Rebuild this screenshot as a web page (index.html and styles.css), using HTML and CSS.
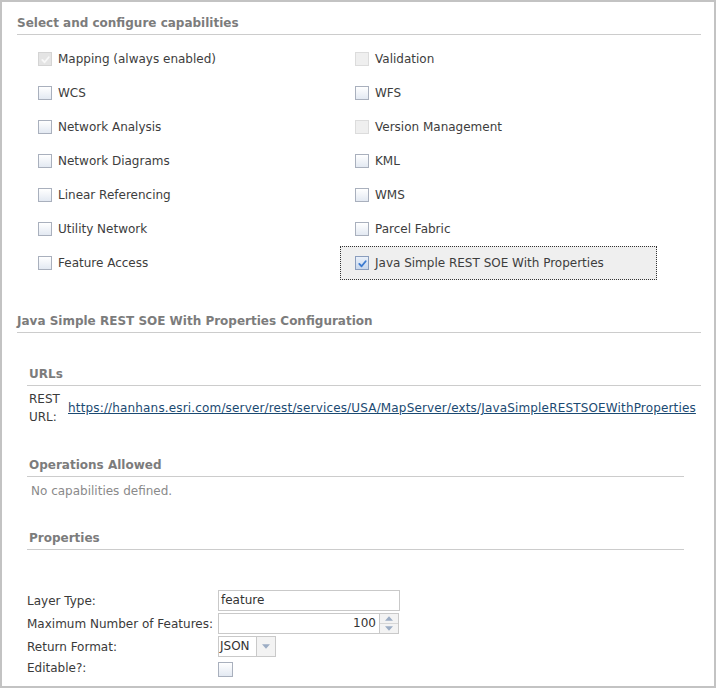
FILE: index.html
```html
<!DOCTYPE html>
<html>
<head>
<meta charset="utf-8">
<link rel="stylesheet" href="styles.css">
</head>
<body>
<div class="frame">
  <h2 class="sec-title">Select and configure capabilities</h2>
  <div class="cap-grid">
    <div class="cap"><span class="cb cb-disabled-checked"><svg viewBox="0 0 12 12"><path d="M2.5 6.5 L5 9 L9.5 3.5"/></svg></span><span>Mapping (always enabled)</span></div>
    <div class="cap"><span class="cb cb-disabled"></span><span>Validation</span></div>
    <div class="cap"><span class="cb"></span><span>WCS</span></div>
    <div class="cap"><span class="cb"></span><span>WFS</span></div>
    <div class="cap"><span class="cb"></span><span>Network Analysis</span></div>
    <div class="cap"><span class="cb cb-disabled"></span><span>Version Management</span></div>
    <div class="cap"><span class="cb"></span><span>Network Diagrams</span></div>
    <div class="cap"><span class="cb"></span><span>KML</span></div>
    <div class="cap"><span class="cb"></span><span>Linear Referencing</span></div>
    <div class="cap"><span class="cb"></span><span>WMS</span></div>
    <div class="cap"><span class="cb"></span><span>Utility Network</span></div>
    <div class="cap"><span class="cb"></span><span>Parcel Fabric</span></div>
    <div class="cap"><span class="cb"></span><span>Feature Access</span></div>
    <div class="cap cap-active"><span class="cb cb-checked"><svg viewBox="0 0 12 12"><path d="M2.5 6.5 L5 9 L9.5 3.5"/></svg></span><span>Java Simple REST SOE With Properties</span></div>
  </div>

  <h2 class="sec-title sec-config">Java Simple REST SOE With Properties Configuration</h2>

  <h3 class="sub-title sub-wide">URLs</h3>
  <table class="url-table">
    <tr>
      <td class="url-label">REST<br>URL:</td>
      <td class="url-link"><a href="#">https://hanhans.esri.com/server/rest/services/USA/MapServer/exts/JavaSimpleRESTSOEWithProperties</a></td>
    </tr>
  </table>

  <h3 class="sub-title sub-ops">Operations Allowed</h3>
  <p class="none-text">No capabilities defined.</p>

  <h3 class="sub-title sub-props">Properties</h3>
  <table class="prop-table">
    <tr>
      <td class="prop-label">Layer Type:</td>
      <td><div class="text-input">feature</div></td>
    </tr>
    <tr>
      <td class="prop-label">Maximum Number of Features:</td>
      <td>
        <div class="spinner">
          <span class="spin-value">100</span>
          <span class="spin-btns">
            <span class="spin-btn"><svg viewBox="0 0 9 5"><path d="M0 5 L4.5 0 L9 5 Z"/></svg></span>
            <span class="spin-btn"><svg viewBox="0 0 9 5"><path d="M0 0 L4.5 5 L9 0 Z"/></svg></span>
          </span>
        </div>
      </td>
    </tr>
    <tr>
      <td class="prop-label">Return Format:</td>
      <td>
        <div class="select">
          <span class="select-value">JSON</span>
          <span class="select-arrow"><svg viewBox="0 0 9 5"><path d="M0 0 L4.5 5 L9 0 Z"/></svg></span>
        </div>
      </td>
    </tr>
    <tr>
      <td class="prop-label">Editable?:</td>
      <td><span class="cb cb-edit"></span></td>
    </tr>
  </table>
</div>
</body>
</html>
```

FILE: styles.css
```css
* { box-sizing: border-box; }

html, body {
  margin: 0;
  padding: 0;
  background: #ffffff;
}

body {
  font-family: "DejaVu Sans", Verdana, sans-serif;
  font-size: 12px;
  line-height: 18px;
  color: #3a3a3a;
}

.frame {
  width: 716px;
  height: 688px;
  border: 2px solid #c3c3c3;
  overflow: hidden;
}

.sec-title {
  margin: 12px 13px 0 15px;
  padding: 0 0 2px 0;
  font-size: 12px;
  line-height: 18px;
  font-weight: bold;
  color: #7c7c7c;
  border-bottom: 1px solid #cccccc;
}

.sec-config {
  margin-top: 32px;
}

.cap-grid {
  margin: 7px 0 0 21px;
  display: grid;
  grid-template-columns: 317px 317px;
  grid-auto-rows: 34px;
}

.cap {
  display: flex;
  align-items: center;
  gap: 6px;
  padding-left: 15px;
  color: #3d3d3d;
}

.cap-active {
  background: #efefef;
  border: 1px dotted #333333;
  padding-left: 14px;
}

.cb {
  display: inline-flex;
  align-items: center;
  justify-content: center;
  width: 14px;
  height: 14px;
  flex: none;
  border: 1px solid #a9b0bd;
  background: linear-gradient(#ffffff, #e3e9f2);
}

.cb svg {
  width: 11px;
  height: 11px;
  fill: none;
  stroke-width: 2;
  stroke-linecap: round;
  stroke-linejoin: round;
}

.cb-disabled {
  border-color: #dcdcdc;
  background: #efefef;
}

.cb-disabled-checked {
  border-color: #d4d4d4;
  background: #e4e4e4;
}

.cb-disabled-checked svg {
  stroke: #f8f8f8;
}

.cb-checked {
  border-color: #8a9dbd;
  background: linear-gradient(#e9f0fa, #c8d7ec);
}

.cb-checked svg {
  stroke: #3b7ad0;
}

.sub-title {
  margin: 0 13px 0 25px;
  padding: 0 0 2px 2px;
  font-size: 12px;
  line-height: 18px;
  font-weight: bold;
  color: #7c7c7c;
  border-bottom: 1px solid #cccccc;
}

.sub-wide {
  margin-top: 32px;
}

.sub-ops {
  margin-top: 30px;
  margin-right: 30px;
}

.sub-props {
  margin-top: 29px;
  margin-right: 30px;
}

.url-table {
  margin: 4px 0 0 27px;
  border-collapse: collapse;
}

.url-table td {
  padding: 0;
  vertical-align: middle;
}

.url-label {
  width: 39px;
  color: #3a3a3a;
}

.url-link a {
  color: #1b4a72;
  text-decoration: underline;
  white-space: nowrap;
  letter-spacing: 0.16px;
}

.none-text {
  margin: 5px 0 0 29px;
  color: #8a8a8a;
}

.prop-table {
  margin: 40px 0 0 25px;
  border-collapse: collapse;
}

.prop-table td {
  padding: 0 0 2px 0;
  vertical-align: middle;
}

.prop-label {
  width: 191px;
  color: #3a3a3a;
}

.text-input {
  width: 182px;
  height: 21px;
  border: 1px solid #c9c9c9;
  padding: 0 2px;
  line-height: 19px;
  color: #333333;
}

.spinner {
  display: flex;
  width: 181px;
  height: 21px;
  border: 1px solid #c9c9c9;
}

.spin-value {
  flex: 1;
  text-align: right;
  padding-right: 3px;
  line-height: 19px;
  color: #333333;
}

.spin-btns {
  display: flex;
  flex-direction: column;
  width: 19px;
  border-left: 1px solid #c9c9c9;
}

.spin-btn {
  flex: 1;
  display: flex;
  align-items: center;
  justify-content: center;
  background: #f3f3f3;
}

.spin-btn + .spin-btn {
  border-top: 1px solid #d6d6d6;
}

.spin-btn svg,
.select-arrow svg {
  width: 8px;
  height: 5px;
  fill: #9cadc4;
}

.select {
  display: flex;
  width: 58px;
  height: 21px;
  border: 1px solid #c9c9c9;
}

.select-value {
  flex: 1;
  padding-left: 1px;
  line-height: 19px;
  color: #333333;
}

.select-arrow {
  width: 19px;
  display: flex;
  align-items: center;
  justify-content: center;
  border-left: 1px solid #c9c9c9;
  background: #f3f3f3;
}

.cb-edit {
  display: flex;
  margin-top: 3px;
  width: 15px;
  height: 15px;
}
```
